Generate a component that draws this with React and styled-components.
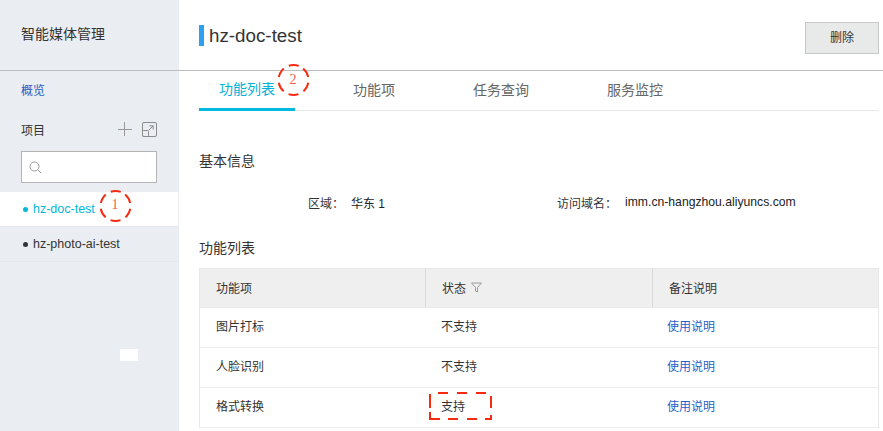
import React from 'react';
import styled, { createGlobalStyle } from 'styled-components';

const Global = createGlobalStyle`
  html, body { margin: 0; padding: 0; background: #fff; }
  body { font-family: "Liberation Sans", "Noto Sans CJK SC", sans-serif; color: #333; font-size: 12px; }
  * { box-sizing: border-box; }
`;

const Page = styled.div`
  position: relative;
  width: 883px;
  height: 431px;
  overflow: hidden;
  display: flex;
`;
const Sidebar = styled.aside`
  width: 179px;
  flex: none;
  background: #eaedf1;
  display: flex;
  flex-direction: column;
`;
const SideHeader = styled.div`
  height: 71px;
  padding: 0 0 4px 21px;
  display: flex;
  align-items: center;
  font-size: 14px;
  color: #333;
  border-bottom: 1px solid #bcbcbc;
`;
const OverviewLink = styled.a`
  display: block;
  padding: 12px 0 0 21px;
  height: 41px;
  line-height: 16px;
  font-size: 12px;
  color: #2a5cc4;
`;
const ProjectHead = styled.div`
  margin-top: 7px;
  height: 20px;
  padding: 0 22px 0 21px;
  display: flex;
  align-items: center;
  justify-content: space-between;
  font-size: 12px;
`;
const ProjectTools = styled.div`
  display: flex;
  align-items: center;
  gap: 10px;
  color: #8c8c8c;
`;
const SearchBox = styled.div`
  margin: 12px 0 0 21px;
  width: 136px;
  height: 32px;
  background: #fff;
  border: 1px solid #b4b4b4;
  display: flex;
  align-items: center;
  padding-left: 7px;
`;
const ProjectList = styled.div`
  margin-top: 9px;
  display: flex;
  flex-direction: column;
`;
const ProjectItem = styled.div`
  height: 35px;
  padding-left: 23px;
  display: flex;
  align-items: center;
  gap: 5px;
  font-size: 12.5px;
  background: ${p => (p.$active ? '#fff' : 'transparent')};
  color: ${p => (p.$active ? '#00b8dc' : '#333')};
  border-bottom: 1px solid #e3e6ea;
  width: 178px;
`;
const Dot = styled.span`
  width: 5px;
  height: 5px;
  border-radius: 50%;
  background: currentColor;
  flex: none;
`;
const Main = styled.main`
  flex: 1;
  display: flex;
  flex-direction: column;
  min-width: 0;
`;
const TitleBar = styled.header`
  height: 71px;
  padding: 0 4px 0 20px;
  display: flex;
  align-items: center;
  justify-content: space-between;
  border-bottom: 1px solid #bcbcbc;
`;
const Title = styled.h1`
  margin: 1px 0 0;
  padding-left: 5px;
  border-left: 5px solid #2f9ff3;
  height: 21px;
  line-height: 21px;
  font-size: 18.8px;
  font-weight: 400;
  color: #333;
`;
const DeleteButton = styled.button`
  width: 74px;
  height: 32px;
  margin-top: 6px;
  background: #e8e9e9;
  border: 1px solid #c8c8c8;
  font: inherit;
  font-size: 12px;
  color: #333;
  padding: 0 0 4px;
`;
const Content = styled.div`
  padding: 0 4px 0 20px;
  display: flex;
  flex-direction: column;
`;
const Tabs = styled.nav`
  height: 40px;
  display: flex;
  gap: 38px;
  border-bottom: 1px solid #e6e6e6;
`;
const Tab = styled.div`
  height: 40px;
  padding: 0 20px 4px;
  display: flex;
  align-items: center;
  font-size: 14px;
  color: ${p => (p.$active ? '#00b1d8' : '#666')};
  border-bottom: ${p => (p.$active ? '3px solid #00bbdd' : '0')};
`;
const SectionTitle = styled.h2`
  margin: ${p => p.$top} 0 0;
  font-size: 14px;
  line-height: 20px;
  font-weight: 400;
  color: #333;
`;
const InfoRow = styled.div`
  margin-top: 21px;
  height: 20px;
  display: flex;
  align-items: center;
  font-size: 12px;
  color: #333;
`;
const InfoLabel = styled.span`
  margin-left: ${p => p.$left};
  width: ${p => p.$width};
  flex: none;
`;
const InfoValue = styled.span`
  width: ${p => p.$width};
  flex: none;
  font-size: ${p => p.$size || '12px'};
  color: #222;
`;
const Table = styled.div`
  margin-top: 10px;
  border-left: 1px solid #e8e8e8;
  border-right: 1px solid #e8e8e8;
  border-top: 1px solid #e8e8e8;
  display: flex;
  flex-direction: column;
`;
const HeadRow = styled.div`
  display: grid;
  grid-template-columns: 225px 227px 1fr;
  height: 39px;
  background: #efefef;
  border-bottom: 1px solid #e8ebee;
`;
const HeadCell = styled.div`
  display: flex;
  align-items: center;
  gap: 5px;
  padding: 0 0 2px 16px;
  font-size: 12px;
  color: #333;
  border-left: ${p => (p.$divider ? '1px solid #d8d8d8' : '0')};
`;
const BodyRow = styled.div`
  display: grid;
  grid-template-columns: 225px 227px 1fr;
  height: 40px;
  border-bottom: 1px solid #eeeeee;
`;
const BodyCell = styled.div`
  display: flex;
  align-items: center;
  padding: 0 0 4px ${p => p.$pad || '16px'};
  font-size: 12px;
  color: #333;
`;
const DocLink = styled.a`
  color: #1f5fc9;
`;
const Marker = styled.svg`
  position: absolute;
  left: ${p => p.$x}px;
  top: ${p => p.$y}px;
  overflow: visible;
`;
const MarkerNumber = styled.span`
  position: absolute;
  left: ${p => p.$x}px;
  top: ${p => p.$y}px;
  width: 12px;
  text-align: center;
  font-family: "Liberation Serif", serif;
  font-size: 14px;
  line-height: 16px;
  color: #f4604f;
`;
const Patch = styled.div`
  position: absolute;
  left: 120px;
  top: 349px;
  width: 18px;
  height: 12px;
  background: #fff;
`;

const Circle = ({ x, y }) => (
  <Marker $x={x} $y={y} width="33" height="32" viewBox="0 0 33 32">
    <circle cx="16.5" cy="16" r="15" fill="none" stroke="#f52a10" strokeWidth="2" strokeDasharray="10 5.7" transform="rotate(-50 16.5 16)" />
  </Marker>
);

export default function App() {
  return (
    <Page>
      <Global />
      <Sidebar>
        <SideHeader>智能媒体管理</SideHeader>
        <OverviewLink>概览</OverviewLink>
        <ProjectHead>
          <span>项目</span>
          <ProjectTools>
            <svg width="14" height="14" viewBox="0 0 14 14" fill="none" stroke="#999">
              <path d="M6.5 0V14M0 7.5H14" />
            </svg>
            <svg width="15" height="15" viewBox="0 0 15 15" fill="none" stroke="currentColor">
              <rect x="0.5" y="0.5" width="14" height="14" rx="1.5" />
              <rect x="0.5" y="8.5" width="6" height="6" rx="1" />
              <path d="M6.5 8.5L11 4M7.5 3.8H11.2V7.5" />
            </svg>
          </ProjectTools>
        </ProjectHead>
        <SearchBox>
          <svg width="13" height="13" viewBox="0 0 13 13" fill="none" stroke="#9a9a9a">
            <circle cx="5.5" cy="5.5" r="4.5" />
            <path d="M9 9L12 12" />
          </svg>
        </SearchBox>
        <ProjectList>
          <ProjectItem $active><Dot />hz-doc-test</ProjectItem>
          <ProjectItem><Dot />hz-photo-ai-test</ProjectItem>
        </ProjectList>
      </Sidebar>
      <Main>
        <TitleBar>
          <Title>hz-doc-test</Title>
          <DeleteButton>删除</DeleteButton>
        </TitleBar>
        <Content>
          <Tabs>
            <Tab $active>功能列表</Tab>
            <Tab>功能项</Tab>
            <Tab>任务查询</Tab>
            <Tab>服务监控</Tab>
          </Tabs>
          <SectionTitle $top="40px">基本信息</SectionTitle>
          <InfoRow>
            <InfoLabel $left="109px" $width="43px">区域：</InfoLabel>
            <InfoValue $width="206px">华东 1</InfoValue>
            <InfoLabel $left="0" $width="68px">访问域名：</InfoLabel>
            <InfoValue $width="200px" $size="12.2px">imm.cn-hangzhou.aliyuncs.com</InfoValue>
          </InfoRow>
          <SectionTitle $top="26px">功能列表</SectionTitle>
          <Table>
            <HeadRow>
              <HeadCell>功能项</HeadCell>
              <HeadCell $divider>
                状态
                <svg width="11" height="11" viewBox="0 0 11 11" fill="none" stroke="#999">
                  <path d="M.5 1H10.5L6.5 5.5V10L4.5 9V5.5Z" />
                </svg>
              </HeadCell>
              <HeadCell $divider>备注说明</HeadCell>
            </HeadRow>
            <BodyRow>
              <BodyCell>图片打标</BodyCell>
              <BodyCell $pad="16px">不支持</BodyCell>
              <BodyCell $pad="15px"><DocLink>使用说明</DocLink></BodyCell>
            </BodyRow>
            <BodyRow>
              <BodyCell>人脸识别</BodyCell>
              <BodyCell $pad="16px">不支持</BodyCell>
              <BodyCell $pad="15px"><DocLink>使用说明</DocLink></BodyCell>
            </BodyRow>
            <BodyRow>
              <BodyCell>格式转换</BodyCell>
              <BodyCell $pad="16px">支持</BodyCell>
              <BodyCell $pad="15px"><DocLink>使用说明</DocLink></BodyCell>
            </BodyRow>
          </Table>
        </Content>
      </Main>
      <Patch />
      <Circle x={99} y={190} />
      <MarkerNumber $x={109} $y={197}>1</MarkerNumber>
      <Circle x={277} y={64} />
      <MarkerNumber $x={287} $y={72}>2</MarkerNumber>
      <Marker $x={429} $y={392} width="63" height="28" viewBox="0 0 63 28">
        <path
          d="M9 1H19M28 1H38M47 1H57M1 2V16M1 20V27H11M19 27H29M38 27H48M56 27H62V23M62 4V16"
          fill="none"
          stroke="#f52a10"
          strokeWidth="2"
        />
      </Marker>
    </Page>
  );
}
